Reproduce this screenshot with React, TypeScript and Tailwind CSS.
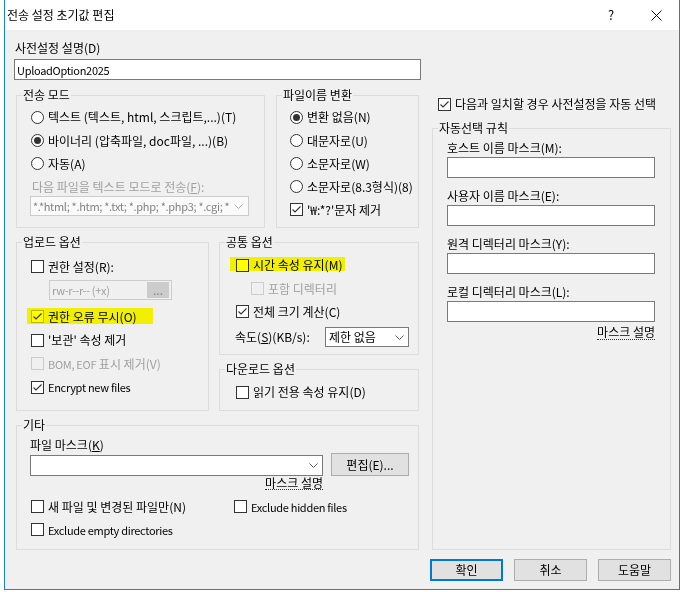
import React from "react";

function CheckMark() {
  return (
    <svg width="11" height="11" viewBox="0 0 11 11" fill="none">
      <path d="M1.5 5.5L4 8L9.5 2.5" stroke="#333333" strokeWidth="1.1" />
    </svg>
  );
}

function Chevron({ color = "#606060" }: { color?: string }) {
  return (
    <svg width="9" height="5" viewBox="0 0 9 5" fill="none">
      <path d="M0.5 0.5L4.5 4.5L8.5 0.5" stroke={color} strokeWidth="1" />
    </svg>
  );
}

function Lat({ children }: { children: React.ReactNode }) {
  return <span className="text-[11px] tracking-[-0.3px]">{children}</span>;
}

function CheckBox({
  checked = false,
  disabled = false,
  faint = false,
  label,
  className = "",
}: {
  checked?: boolean;
  disabled?: boolean;
  faint?: boolean;
  label: React.ReactNode;
  className?: string;
}) {
  const box = disabled
    ? "border-[#cccccc] bg-[#f0f0f0]"
    : faint
    ? "border-[#b8b8b8] bg-white"
    : "border-[#333333] bg-white";
  return (
    <div className={"flex items-center " + className}>
      <span className={"w-[13px] h-[13px] border flex items-center justify-center shrink-0 " + box}>
        {checked && <CheckMark />}
      </span>
      <span className={"ml-[4px] whitespace-nowrap leading-[16px] " + (disabled ? "text-[#a0a0a0]" : "text-black")}>
        {label}
      </span>
    </div>
  );
}

function Radio({
  checked = false,
  label,
  className = "",
}: {
  checked?: boolean;
  label: React.ReactNode;
  className?: string;
}) {
  return (
    <div className={"flex items-center " + className}>
      <span className="w-[13px] h-[13px] rounded-full border border-[#333333] bg-white flex items-center justify-center shrink-0">
        {checked && <span className="w-[7px] h-[7px] rounded-full bg-[#333333]" />}
      </span>
      <span className="ml-[4px] whitespace-nowrap leading-[16px]">{label}</span>
    </div>
  );
}

function Legend({ children }: { children: React.ReactNode }) {
  return <legend className="ml-[5px] px-[1px] leading-[16px] text-black">{children}</legend>;
}

function TextBox({ className = "", children }: { className?: string; children?: React.ReactNode }) {
  return (
    <div className={"h-[21px] border border-[#7a7a7a] bg-white flex items-center pl-[2px] leading-[16px] " + className}>
      {children}
    </div>
  );
}

function Button({ def = false, children, className = "" }: { def?: boolean; children: React.ReactNode; className?: string }) {
  return (
    <div
      className={
        "h-[22px] w-[73px] bg-[#e1e1e1] flex items-center justify-center leading-[16px] " +
        (def ? "border-2 border-[#0078d7]" : "border border-[#adadad]") +
        " " +
        className
      }
    >
      {children}
    </div>
  );
}

export default function App() {
  return (
    <div className="w-[683px] h-[592px] bg-white overflow-hidden font-['Noto_Sans_CJK_KR','Noto_Sans',sans-serif] text-[12px] text-black">
      <div className="ml-[4px] w-[676px] h-[590px] border-l border-r border-b border-[#1883d7] bg-[#f0f0f0] flex flex-col">
        {/* title bar */}
        <div className="h-[30px] bg-white flex items-center shrink-0">
          <div className="flex-1 pl-[2px] leading-[16px] text-[12px]">전송 설정 초기값 편집</div>
          <div className="w-[46px] h-[30px] flex items-center justify-center text-[13px] leading-[16px]">?</div>
          <div className="w-[45px] h-[30px] flex items-center justify-center">
            <svg width="11" height="11" viewBox="0 0 11 11" fill="none">
              <path d="M0.5 0.5L10.5 10.5M10.5 0.5L0.5 10.5" stroke="#111111" strokeWidth="1" />
            </svg>
          </div>
        </div>

        {/* body */}
        <div className="flex-1 flex flex-col pl-[11px] pr-[7px] pt-[10px]">
          <div className="-ml-[1px] h-[16px] leading-[16px]">사전설정 설명(D)</div>
          <TextBox className="-ml-[2px] mt-[3px] w-[407px]">
            <Lat>UploadOption2025</Lat>
          </TextBox>

          <div className="mt-[7px] flex gap-[13px]">
            {/* left column */}
            <div className="w-[403px] flex flex-col">
              <div className="flex gap-[11px]">
                <fieldset className="border border-[#dcdcdc] w-[249px] h-[141px] min-w-0">
                  <Legend>전송 모드</Legend>
                  <div className="pl-[14px] pt-[2px] flex flex-col">
                    <Radio className="h-[24px]" label="텍스트 (텍스트, html, 스크립트,...)(T)" />
                    <Radio className="h-[23px]" checked label="바이너리 (압축파일, doc파일, ...)(B)" />
                    <Radio className="h-[23px]" label="자동(A)" />
                    <div className="mt-[4px] h-[16px] leading-[16px] text-[#a0a0a0] pl-[1px] whitespace-nowrap">
                      다음 파일을 텍스트 모드로 전송(<span className="underline">F</span>):
                    </div>
                    <div className="-ml-[1px] mt-[1px] w-[219px] h-[20px] border border-[#cccccc] bg-[#fafafa] flex items-center">
                      <div className="w-[198px] overflow-hidden whitespace-nowrap pl-[2px] text-[#838383] leading-[16px]">
                        <Lat>*.*html; *.htm; *.txt; *.php; *.php3; *.cgi; *.c; *.cpp</Lat>
                      </div>
                      <div className="flex-1 flex items-center justify-center">
                        <Chevron color="#b0b0b0" />
                      </div>
                    </div>
                  </div>
                </fieldset>

                <fieldset className="border border-[#dcdcdc] w-[143px] h-[141px] min-w-0">
                  <Legend>파일이름 변환</Legend>
                  <div className="pl-[13px] pt-[2px] flex flex-col">
                    <Radio className="h-[24px]" checked label="변환 없음(N)" />
                    <Radio className="h-[23px]" label="대문자로(U)" />
                    <Radio className="h-[23px]" label="소문자로(W)" />
                    <Radio className="h-[23px]" label="소문자로(8.3형식)(8)" />
                    <CheckBox className="h-[23px]" checked label="'₩:*?'문자 제거" />
                  </div>
                </fieldset>
              </div>

              <div className="mt-[6px] flex gap-[10px]">
                <fieldset className="border border-[#dcdcdc] w-[193px] h-[177px] min-w-0">
                  <Legend>업로드 옵션</Legend>
                  <div className="pl-[14px] pt-[5px] flex flex-col">
                    <CheckBox className="h-[23px]" label="권한 설정(R):" />
                    <div className="ml-[18px] mt-[2px] w-[123px] h-[20px] border border-[#cccccc] bg-[#f0f0f0] flex items-center">
                      <span className="flex-1 pl-[2px] text-[#a0a0a0] leading-[16px] whitespace-nowrap">
                        <Lat>rw-r--r-- (+x)</Lat>
                      </span>
                      <span className="w-[22px] h-[16px] mr-[2px] bg-[#cccccc] text-[#838383] flex items-center justify-center leading-[12px]">
                        ...
                      </span>
                    </div>
                    <div className="relative mt-[5px]">
                      <CheckBox className="h-[23px]" checked faint label="권한 오류 무시(O)" />
                      <span className="absolute left-[-4px] top-[3px] w-[126px] h-[16px] bg-[#ffff00] mix-blend-multiply" />
                    </div>
                    <CheckBox className="h-[24px]" label="'보관' 속성 제거" />
                    <CheckBox
                      className="h-[23px]"
                      disabled
                      label={
                        <>
                          <Lat>BOM, EOF</Lat> 표시 제거(V)
                        </>
                      }
                    />
                    <CheckBox className="h-[24px]" checked label={<Lat>Encrypt new files</Lat>} />
                  </div>
                </fieldset>

                <div className="w-[200px] flex flex-col">
                  <fieldset className="border border-[#dcdcdc] w-[200px] h-[121px] min-w-0">
                    <Legend>공통 옵션</Legend>
                    <div className="pl-[16px] pt-[3px] flex flex-col">
                      <div className="relative">
                        <CheckBox className="h-[24px]" label="시간 속성 유지(M)" />
                        <span className="absolute left-[-6px] top-[4px] w-[115px] h-[14px] bg-[#ffff00] mix-blend-multiply" />
                      </div>
                      <CheckBox className="h-[23px] ml-[15px]" disabled label="포함 디렉터리" />
                      <CheckBox className="h-[23px]" checked label="전체 크기 계산(C)" />
                      <div className="mt-[4px] flex items-center h-[20px] -ml-[1px]">
                        <div className="w-[90px] leading-[16px] whitespace-nowrap">
                          속도(<span className="underline">S</span>)(KB/s):
                        </div>
                        <div className="w-[84px] h-[20px] border border-[#7a7a7a] bg-white flex items-center">
                          <span className="flex-1 pl-[3px] leading-[16px] whitespace-nowrap">제한 없음</span>
                          <span className="w-[18px] flex items-center justify-center">
                            <Chevron />
                          </span>
                        </div>
                      </div>
                    </div>
                  </fieldset>

                  <fieldset className="mt-[6px] border border-[#dcdcdc] w-[200px] h-[50px] min-w-0">
                    <Legend>다운로드 옵션</Legend>
                    <div className="pl-[16px] pt-[3px] flex flex-col">
                      <CheckBox className="h-[24px]" label="읽기 전용 속성 유지(D)" />
                    </div>
                  </fieldset>
                </div>
              </div>

              <fieldset className="mt-[6px] border border-[#dcdcdc] w-[403px] h-[133px] min-w-0">
                <Legend>기타</Legend>
                <div className="pl-[13px] pt-[4px] flex flex-col">
                  <div className="h-[16px] leading-[16px]">
                    파일 마스크(<span className="underline">K</span>)
                  </div>
                  <div className="flex items-end h-[23px]">
                    <div className="w-[293px] h-[21px] border border-[#7a7a7a] bg-white flex items-center justify-end">
                      <span className="w-[18px] flex items-center justify-center">
                        <Chevron />
                      </span>
                    </div>
                    <div className="ml-[8px] w-[78px] h-[23px] bg-[#e1e1e1] border border-[#adadad] flex items-center justify-center leading-[16px]">
                      편집(E)...
                    </div>
                  </div>
                  <div className="w-[293px] flex justify-end">
                    <span className="leading-[13px] border-b border-dotted border-[#333333] whitespace-nowrap">마스크 설명</span>
                  </div>
                  <div className="mt-[5px] flex ml-[1px]">
                    <CheckBox className="h-[23px] w-[203px]" label="새 파일 및 변경된 파일만(N)" />
                    <CheckBox className="h-[23px]" label={<Lat>Exclude hidden files</Lat>} />
                  </div>
                  <div className="flex ml-[1px]">
                    <CheckBox className="h-[23px]" label={<Lat>Exclude empty directories</Lat>} />
                  </div>
                </div>
              </fieldset>
            </div>

            {/* right column */}
            <div className="w-[239px] flex flex-col pt-[9px]">
              <CheckBox className="h-[16px] ml-[6px]" checked label="다음과 일치할 경우 사전설정을 자동 선택" />
              <fieldset className="mt-[8px] flex-1 border border-[#dcdcdc] min-w-0">
                <Legend>자동선택 규칙</Legend>
                <div className="pl-[14px] pt-[4px] flex flex-col">
                  <div className="h-[16px] leading-[16px]">호스트 이름 마스크(M):</div>
                  <TextBox className="mt-[1px] w-[208px]" />
                  <div className="mt-[10px] h-[16px] leading-[16px]">사용자 이름 마스크(E):</div>
                  <TextBox className="mt-[1px] w-[208px]" />
                  <div className="mt-[10px] h-[16px] leading-[16px]">원격 디렉터리 마스크(Y):</div>
                  <TextBox className="mt-[1px] w-[208px]" />
                  <div className="mt-[10px] h-[16px] leading-[16px]">로컬 디렉터리 마스크(L):</div>
                  <TextBox className="mt-[1px] w-[208px]" />
                  <div className="w-[208px] mt-[3px] flex justify-end">
                    <span className="leading-[14px] border-b border-dotted border-[#333333] whitespace-nowrap">마스크 설명</span>
                  </div>
                </div>
              </fieldset>
            </div>
          </div>

          <div className="mt-[9px] flex justify-end gap-[11px] pr-[1px]">
            <Button def>확인</Button>
            <Button>취소</Button>
            <Button>도움말</Button>
          </div>
        </div>
      </div>
    </div>
  );
}
